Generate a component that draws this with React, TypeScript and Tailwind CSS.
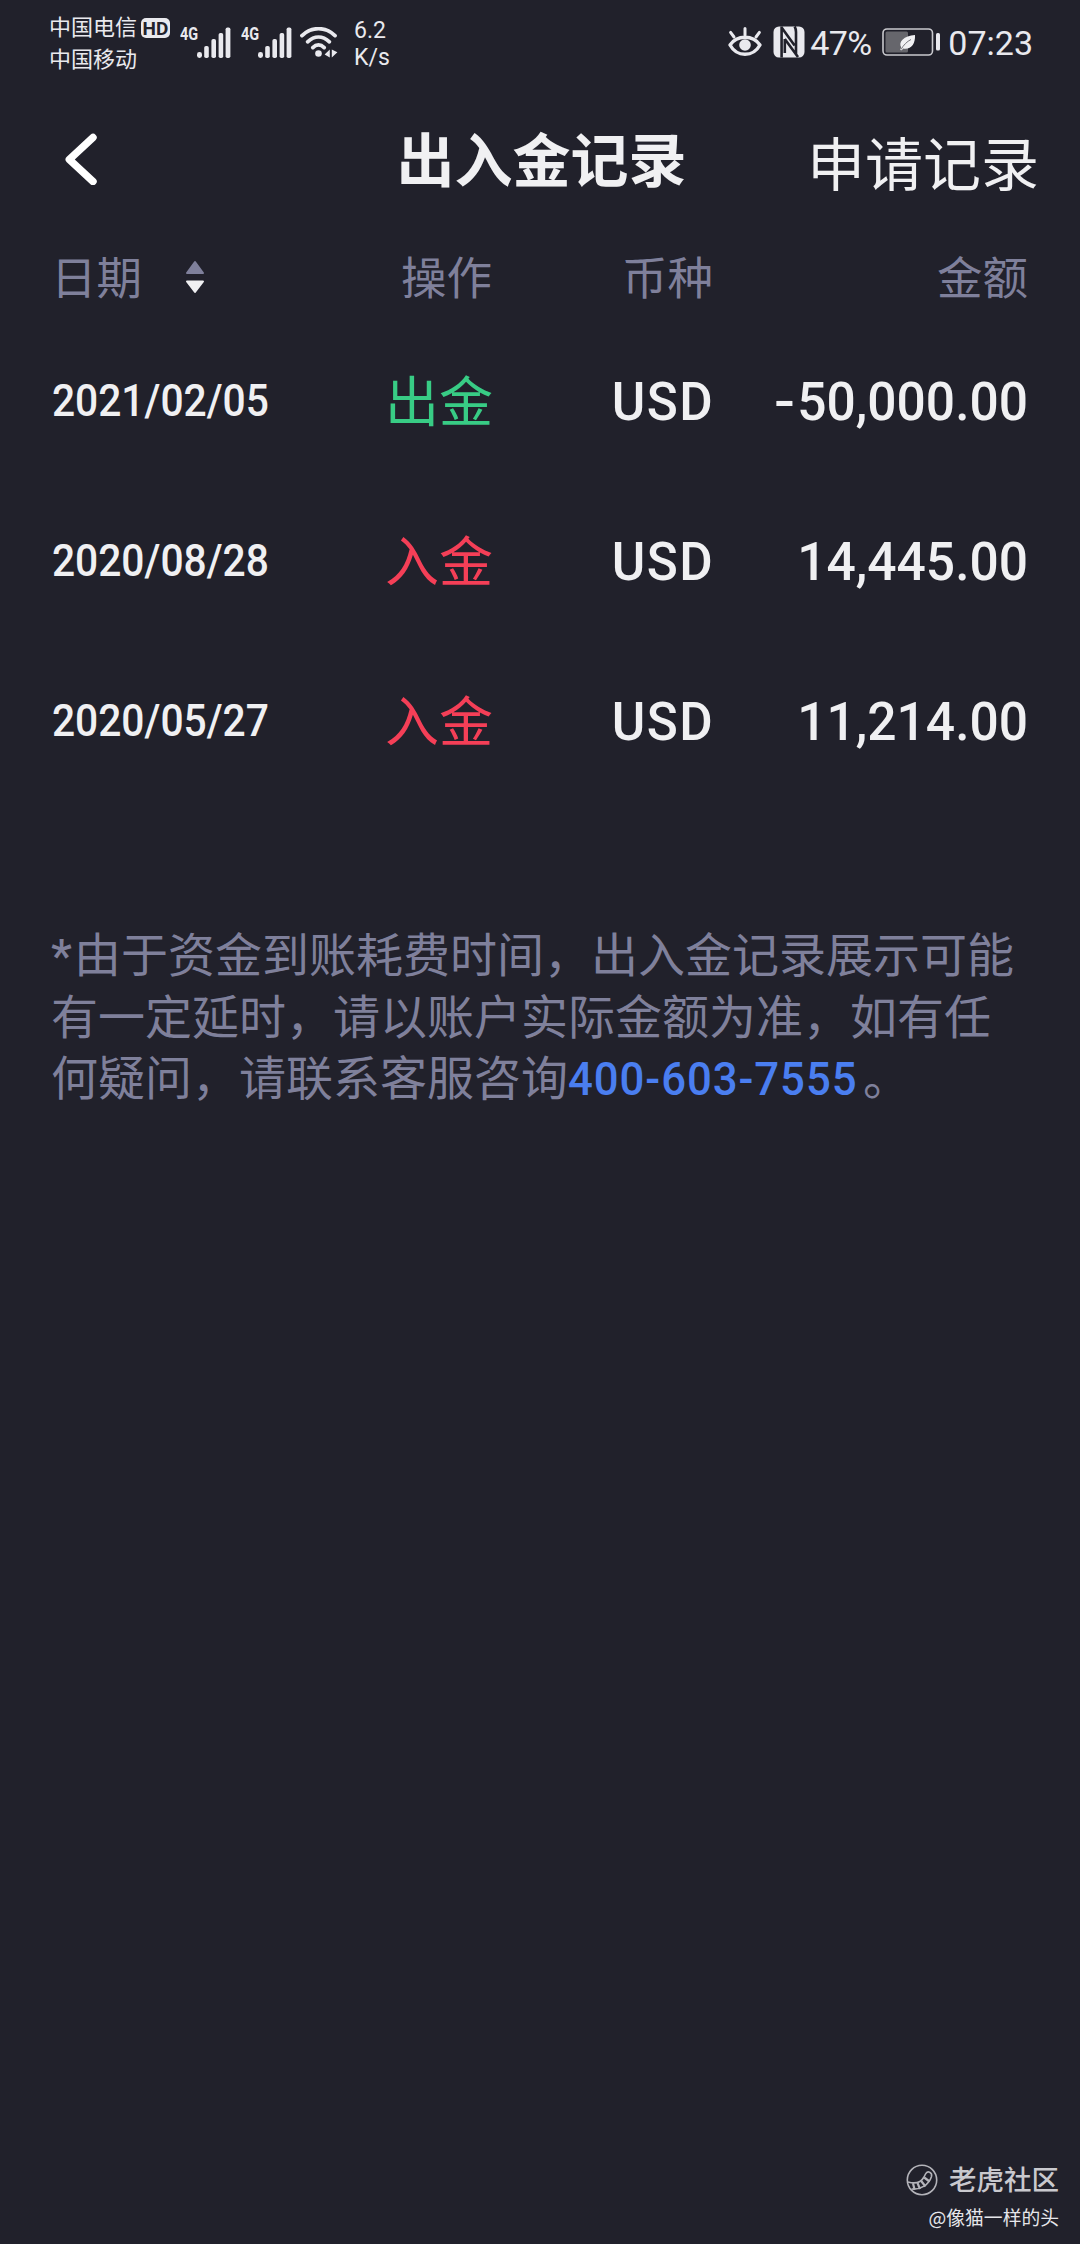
import React from 'react';

interface FundRecord {
  date: string;
  type: 'in' | 'out';
  currency: string;
  amount: string;
}

const RECORDS: FundRecord[] = [
  { date: '2021/02/05', type: 'out', currency: 'USD', amount: '-50,000.00' },
  { date: '2020/08/28', type: 'in', currency: 'USD', amount: '14,445.00' },
  { date: '2020/05/27', type: 'in', currency: 'USD', amount: '11,214.00' },
];

const SignalIcon: React.FC = () => (
  <svg width="34" height="32" viewBox="0 0 34 32" fill="#e9e9ee">
    <rect x="0" y="25" width="5" height="6" rx="2.4" />
    <rect x="7.2" y="19" width="4.6" height="12" rx="1.8" />
    <rect x="14.4" y="12" width="4.6" height="19" rx="1.8" />
    <rect x="21.6" y="6" width="4.6" height="25" rx="1.8" />
    <rect x="28.6" y="0.5" width="4.8" height="30.5" rx="1.8" />
  </svg>
);

const MobileSignal: React.FC = () => (
  <div className="flex items-start w-[51px] h-8">
    <span className="w-[17px] h-4 -mt-[2px] origin-left scale-x-[0.76] font-['Roboto',sans-serif] text-[19px] leading-[18px] font-bold">4G</span>
    <SignalIcon />
  </div>
);

const WifiIcon: React.FC = () => (
  <svg width="38" height="32" viewBox="0 0 38 32" fill="none" stroke="#e9e9ee" strokeWidth="3.8" strokeLinecap="round">
    <path d="M2 8.6C12 -0.6 25 -0.6 35 8.6" />
    <path d="M7.6 14.8C14.4 8.6 22.6 8.6 29.4 14.8" />
    <path d="M12.8 20.6C16.4 17 20.6 17 24.2 20.6" />
    <circle cx="18.5" cy="26.5" r="3.3" fill="#e9e9ee" stroke="none" />
    <path d="M29.8 22.5V30.5L24.6 27.4ZM31.8 22.5V30.5L37.4 25.2Z" fill="#e9e9ee" stroke="none" />
  </svg>
);

const EyeIcon: React.FC = () => (
  <svg width="34" height="32" viewBox="0 0 34 32" fill="none" stroke="#e9e9ee" strokeWidth="3.4" strokeLinecap="round">
    <path d="M2 19C9 8.6 25 8.6 32 19C25 31.4 9 31.4 2 19Z" strokeLinejoin="round" />
    <circle cx="17" cy="19" r="5.8" fill="#e9e9ee" stroke="none" />
    <path d="M17 2.5V9M2.6 6.4L6 11M31.4 6.4L28 11" strokeWidth="3" />
  </svg>
);

const NfcIcon: React.FC = () => (
  <svg width="32" height="32" viewBox="0 0 32 32" fill="none">
    <rect x="0.5" y="0.5" width="31" height="31" rx="5.5" fill="#e9e9ee" />
    <path d="M8.6 0.5V31.5M8.6 1.5L21.6 19.5M11.8 13V27M11.8 13L25 31M21.6 0.5Q23.2 3 23 7V29" stroke="#21212b" strokeWidth="2.6" />
  </svg>
);

const BatteryIcon: React.FC = () => (
  <svg width="59" height="28" viewBox="0 0 59 28">
    <rect x="1" y="1" width="49.5" height="26" rx="4" fill="none" stroke="#c9c9ce" strokeWidth="1.6" />
    <rect x="3.5" y="3.5" width="22.5" height="21" rx="1.5" fill="#66666c" />
    <path d="M33 7C22 8 16 13.5 19.2 19.5L18 22L19.8 22.2L21.2 20.6C29 22 33.5 16 33 7Z" fill="#f0f0f3" />
    <path d="M19 21.5C21.5 17 25 13.5 29 11.5" fill="none" stroke="#77777d" strokeWidth="1" />
    <rect x="54" y="5" width="4" height="17.5" rx="1.6" fill="#e9e9ee" />
  </svg>
);

const StatusBar: React.FC = () => (
  <div className="flex justify-between h-[90px] pl-[49px] pr-[47px] text-[#e9e9ee]">
    <div className="flex">
      <div className="w-[92px] pt-[9px] font-['Noto_Sans_CJK_SC',sans-serif] text-[22px] leading-8">
        <div className="whitespace-nowrap">中国电信</div>
        <div className="whitespace-nowrap">中国移动</div>
      </div>
      <div className="w-[29px] h-5 mt-[18px] rounded-[5px] bg-[#e9e9ee] text-[#21212b] text-center font-['Roboto',sans-serif] text-[19px] leading-[21px] font-bold">HD</div>
      <div className="flex gap-[10px] pl-[10px] pt-[27px]">
        <MobileSignal />
        <MobileSignal />
      </div>
      <div className="pl-[8px] pt-[27px]">
        <WifiIcon />
      </div>
      <div className="pl-[16px] pt-[17px] font-['Roboto',sans-serif] text-[23px] leading-[27px]">
        <div>6.2</div>
        <div>K/s</div>
      </div>
    </div>
    <div className="flex pt-[26px] font-['Roboto',sans-serif] text-[34px] leading-[34px]">
      <EyeIcon />
      <div className="pl-[11px]">
        <NfcIcon />
      </div>
      <div className="w-[77px] pl-[5px] whitespace-nowrap tracking-[-0.6px]">47%</div>
      <div className="pt-[2px]">
        <BatteryIcon />
      </div>
      <div className="pl-[7px]">07:23</div>
    </div>
  </div>
);

const Header: React.FC = () => (
  <div className="grid grid-cols-[345px_390px_1fr] h-[140px] pr-[41px] font-['Noto_Sans_CJK_SC',sans-serif] text-[#f0f0f2]">
    <button className="flex pl-[65px] pt-[43px]">
      <svg width="36" height="52" viewBox="0 0 36 52" fill="none" stroke="#ffffff" strokeWidth="7.4" strokeLinecap="round" strokeLinejoin="round">
        <path d="M28 4.5L4.3 26.5L28 48.5" />
      </svg>
    </button>
    <h1 className="pl-[3px] pt-[27px] text-center text-[58px] leading-20 font-bold">出入金记录</h1>
    <div className="pt-[31px] text-right text-[58px] leading-20 whitespace-nowrap">申请记录</div>
  </div>
);

const SortIcon: React.FC = () => (
  <svg width="20" height="34" viewBox="0 0 20 34" strokeWidth="2" strokeLinejoin="round">
    <path d="M10 2L18 13H2Z" fill="#7f809b" stroke="#7f809b" />
    <path d="M10 32L18 21.5H2Z" fill="#f0f0f2" stroke="#f0f0f2" />
  </svg>
);

const ListHead: React.FC = () => (
  <div className="grid grid-cols-[250px_191px_221px_1fr] h-[91px] pl-[51px] pr-[52px] pt-[15px] font-['Noto_Sans_CJK_SC',sans-serif] text-[45.5px] leading-[60px] text-[#7f809b]">
    <div className="flex">
      <span>日期</span>
      <span className="pl-[43px] pt-[15px]">
        <SortIcon />
      </span>
    </div>
    <div className="text-right">操作</div>
    <div className="text-right">币种</div>
    <div className="text-right">金额</div>
  </div>
);

const RecordRow: React.FC<{ record: FundRecord }> = ({ record }) => {
  const isOut = record.type === 'out';

  return (
    <div className="grid grid-cols-[250px_192px_220px_1fr] items-center h-40 pl-[51px] pr-[52px] font-['Roboto',sans-serif] text-[54.5px] leading-20 font-medium text-[#f0f0f2]">
      <div className="pl-px origin-left scale-x-[0.905] text-[45px] whitespace-nowrap">{record.date}</div>
      <div
        className={`pb-[5px] text-right font-['Noto_Sans_CJK_SC',sans-serif] text-[54px] font-normal ${
          isOut ? 'text-[#38cc85]' : 'text-[#f53f57]'
        }`}
      >
        {isOut ? '出金' : '入金'}
      </div>
      <div className="origin-right scale-x-[0.94] text-right tracking-[1.5px] -mr-px">{record.currency}</div>
      <div className="origin-right scale-x-[0.945] text-right whitespace-nowrap">
        {isOut && <span className="inline-block mr-[2px] origin-right scale-x-[1.2]">-</span>}
        {record.amount.replace('-', '')}
      </div>
    </div>
  );
};

const Notice: React.FC = () => (
  <div className="pl-[51px] pt-[124px] font-['Roboto','Noto_Sans_CJK_SC',sans-serif] text-[47px] leading-[61.7px] text-[#7f809b] whitespace-nowrap">
    <div>
      <span className="inline-block w-[23px] font-medium">*</span>
      由于资金到账耗费时间，出入金记录展示可能
    </div>
    <div>有一定延时，请以账户实际金额为准，如有任</div>
    <div className="flex">
      <span>何疑问，请联系客服咨询</span>
      <a href="tel:4006037555" className="w-[295px] pt-px origin-left scale-x-[0.95] text-[46px] tracking-[1px] font-medium text-[#4a7ef0]">
        400-603-7555
      </a>
      <span>。</span>
    </div>
  </div>
);

const Watermark: React.FC = () => (
  <div className="mt-auto pr-[21px] pb-[9px] flex flex-col items-end font-['Noto_Sans_CJK_SC',sans-serif]">
    <div className="flex items-center gap-[11px] mb-px text-[27.5px] leading-10 font-medium text-[#c9c9ce]">
      <svg className="mt-[3px]" width="32" height="32" viewBox="0 0 32 32" fill="none" stroke="#b4b4ba" strokeWidth="1.6">
        <circle cx="16" cy="16" r="14.7" />
        <path d="M2 18C9 20 15 18.5 18 13L19.5 10C21.5 6 26.5 8.5 25.5 12.5C23 20.5 15 26 5.5 25" />
        <path d="M7 19.3L8.5 25.5M11.5 19L14 25M15.2 17L19.5 22.5M18.2 13.5L23.5 17.5" strokeWidth="2.2" />
      </svg>
      <span>老虎社区</span>
    </div>
    <div className="text-[18.8px] leading-9 text-[#e6e6ea]">@像猫一样的头</div>
  </div>
);

export default function App() {
  return (
    <div className="flex flex-col w-[1080px] h-[2244px] bg-[#21212b] overflow-hidden">
      <StatusBar />
      <Header />
      <ListHead />
      {RECORDS.map((record) => (
        <RecordRow key={record.date} record={record} />
      ))}
      <Notice />
      <Watermark />
    </div>
  );
}
